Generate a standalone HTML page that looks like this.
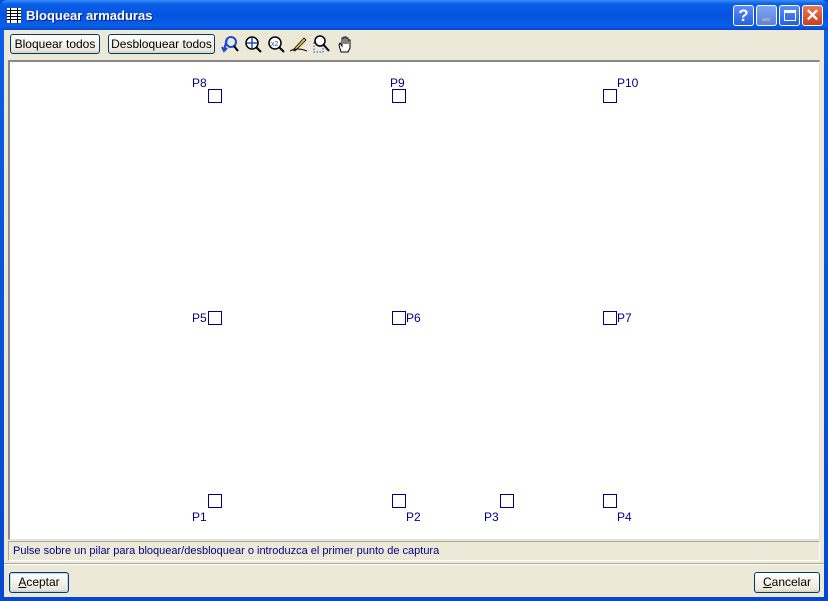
<!DOCTYPE html>
<html><head><style>
*{margin:0;padding:0;box-sizing:border-box}
body{width:828px;height:601px;overflow:hidden;background:#0a4ad8;font-family:"Liberation Sans",sans-serif;font-size:11px;position:relative}
.win{position:absolute;left:0;top:0;width:828px;height:601px;background:linear-gradient(#0a5fe8,#0548d0);border-radius:7px 7px 0 0}
.title{position:absolute;left:0;top:0;width:828px;height:30px;background:linear-gradient(#3b8cf8 0,#0a5fe8 4px,#0553e0 15px,#0a5ee8 26px,#0747c8 30px);border-radius:7px 7px 0 0}
.title span{position:absolute;left:26px;top:8px;color:#fff;font-weight:bold;font-size:13px;text-shadow:1px 1px #0a2080}
.client{position:absolute;left:4px;top:30px;width:820px;height:567px;background:#ece9d8}
.btn{position:absolute;border:1px solid #003c74;border-radius:3px;background:linear-gradient(#fff,#ece9d8 85%,#d6d0c0);text-align:center;font-size:12px;color:#000;line-height:18px}
.canvas{position:absolute;left:4px;top:30px;width:812px;height:480px;background:#fff;border-left:2px solid #888;border-top:2px solid #888;border-right:1px solid #ddd;border-bottom:1px solid #ddd}
.sq{position:absolute;width:14px;height:14px;border:1.5px solid #000080}
.lb{position:absolute;color:#000080;font-size:12px}
.status{position:absolute;left:4px;top:511px;width:812px;height:20px;border-top:1px solid #aca899;border-left:1px solid #aca899;border-bottom:1px solid #fff;border-right:1px solid #fff;color:#000080;padding:3px 4px;font-size:11px}
.sep{position:absolute;left:0;top:533px;width:820px;border-top:1px solid #aca899;border-bottom:1px solid #fff}
.tb{position:absolute;top:4px;width:20px;height:20px}
.cap{position:absolute;top:5px;width:21px;height:21px;border:1px solid #fff;border-radius:3px}
</style></head><body>
<div class="win"></div>
<div class="title">
<svg style="position:absolute;left:7px;top:8px" width="14" height="15"><g fill="#fff"><rect x="0" y="0" width="14" height="15"/></g><g stroke="#000" stroke-width="1"><line x1="0" y1="2.5" x2="14" y2="2.5"/><line x1="0" y1="5.5" x2="14" y2="5.5"/><line x1="0" y1="8.5" x2="14" y2="8.5"/><line x1="0" y1="11.5" x2="14" y2="11.5"/><line x1="3.5" y1="0" x2="3.5" y2="15"/><line x1="10.5" y1="0" x2="10.5" y2="15"/></g></svg>
<span>Bloquear armaduras</span>
<div class="cap" style="left:733px;background:linear-gradient(#5a8ef8,#2560e0);color:#fff;font-weight:bold;font-size:17px;text-align:center;line-height:20px">?</div>
<div class="cap" style="left:756px;background:linear-gradient(#7fa6f0,#5a82e0)"><div style="position:absolute;left:5px;top:12px;width:8px;height:3px;background:#9ab"></div></div>
<div class="cap" style="left:779px;background:linear-gradient(#5a8ef8,#2560e0)"><div style="position:absolute;left:4px;top:4px;width:12px;height:11px;border:1px solid #fff;border-top:3px solid #fff"></div></div>
<div class="cap" style="left:802px;background:linear-gradient(#e87858,#c8401c);color:#fff;font-size:17px;text-align:center;line-height:20px;font-weight:bold">✕</div>
</div>
<div class="client">
<div class="btn" style="left:6px;top:4px;width:90px;height:20px">Bloquear todos</div>
<div class="btn" style="left:104px;top:4px;width:107px;height:20px">Desbloquear todos</div>
<svg class="tb" style="left:216px" viewBox="0 0 20 20"><circle cx="11" cy="8" r="5" fill="none" stroke="#1a4bd0" stroke-width="2"/><path d="M7 5 L4 16 M2 13 L4 17 L7 14" stroke="#1a4bd0" stroke-width="2" fill="none"/><line x1="14" y1="12" x2="18" y2="17" stroke="#000" stroke-width="2"/></svg>
<svg class="tb" style="left:239px" viewBox="0 0 20 20"><circle cx="9" cy="9" r="6" fill="#fff" stroke="#000" stroke-width="1.5"/><path d="M9 4v10M4 9h10" stroke="#1a4bd0" stroke-width="1.5"/><line x1="13" y1="13" x2="18" y2="18" stroke="#000" stroke-width="2"/></svg>
<svg class="tb" style="left:262px" viewBox="0 0 20 20"><circle cx="9" cy="9" r="6" fill="#fff" stroke="#000" stroke-width="1.5"/><text x="5" y="12" font-size="7" fill="#1a4bd0" font-family="Liberation Sans">x2</text><line x1="13" y1="13" x2="18" y2="18" stroke="#000" stroke-width="2"/></svg>
<svg class="tb" style="left:285px" viewBox="0 0 20 20"><path d="M4 16 L15 4 L17 6 L6 17 Z" fill="#f0c040" stroke="#000" stroke-width="0.8"/><path d="M1 17 Q8 13 18 17" stroke="#000" fill="none"/></svg>
<svg class="tb" style="left:308px" viewBox="0 0 20 20"><rect x="2" y="8" width="9" height="10" fill="none" stroke="#1a4bd0" stroke-dasharray="1.5 1.5"/><circle cx="8" cy="7" r="5" fill="#fff" stroke="#000" stroke-width="1.5"/><line x1="11" y1="10" x2="17" y2="17" stroke="#000" stroke-width="2"/></svg>
<svg class="tb" style="left:331px" viewBox="0 0 20 20"><path d="M6 18 L4 11 L5 9 L7 12 L7 4 L9 4 L9 10 L9 3 L11 3 L11 10 L11 4 L13 4 L13 10 L13 6 L15 6 L15 14 L13 18 Z" fill="#fff" stroke="#000" stroke-width="1"/></svg>
<div class="canvas">
<div class="lb" style="left:182px;top:14px">P8</div><div class="sq" style="left:198px;top:27px"></div>
<div class="lb" style="left:380px;top:14px">P9</div><div class="sq" style="left:382px;top:27px"></div>
<div class="lb" style="left:607px;top:14px">P10</div><div class="sq" style="left:593px;top:27px"></div>
<div class="lb" style="left:182px;top:249px">P5</div><div class="sq" style="left:198px;top:249px"></div>
<div class="lb" style="left:396px;top:249px">P6</div><div class="sq" style="left:382px;top:249px"></div>
<div class="lb" style="left:607px;top:249px">P7</div><div class="sq" style="left:593px;top:249px"></div>
<div class="sq" style="left:198px;top:432px"></div><div class="lb" style="left:182px;top:448px">P1</div>
<div class="sq" style="left:382px;top:432px"></div><div class="lb" style="left:396px;top:448px">P2</div>
<div class="sq" style="left:490px;top:432px"></div><div class="lb" style="left:474px;top:448px">P3</div>
<div class="sq" style="left:593px;top:432px"></div><div class="lb" style="left:607px;top:448px">P4</div>
</div>
<div class="status">Pulse sobre un pilar para bloquear/desbloquear o introduzca el primer punto de captura</div>
<div class="sep"></div>
<div class="btn" style="left:5px;top:542px;width:60px;height:21px;box-shadow:inset 0 0 0 1px #c0d0f0"><u>A</u>ceptar</div>
<div class="btn" style="left:750px;top:542px;width:66px;height:21px"><u>C</u>ancelar</div>
</div>
</body></html>
